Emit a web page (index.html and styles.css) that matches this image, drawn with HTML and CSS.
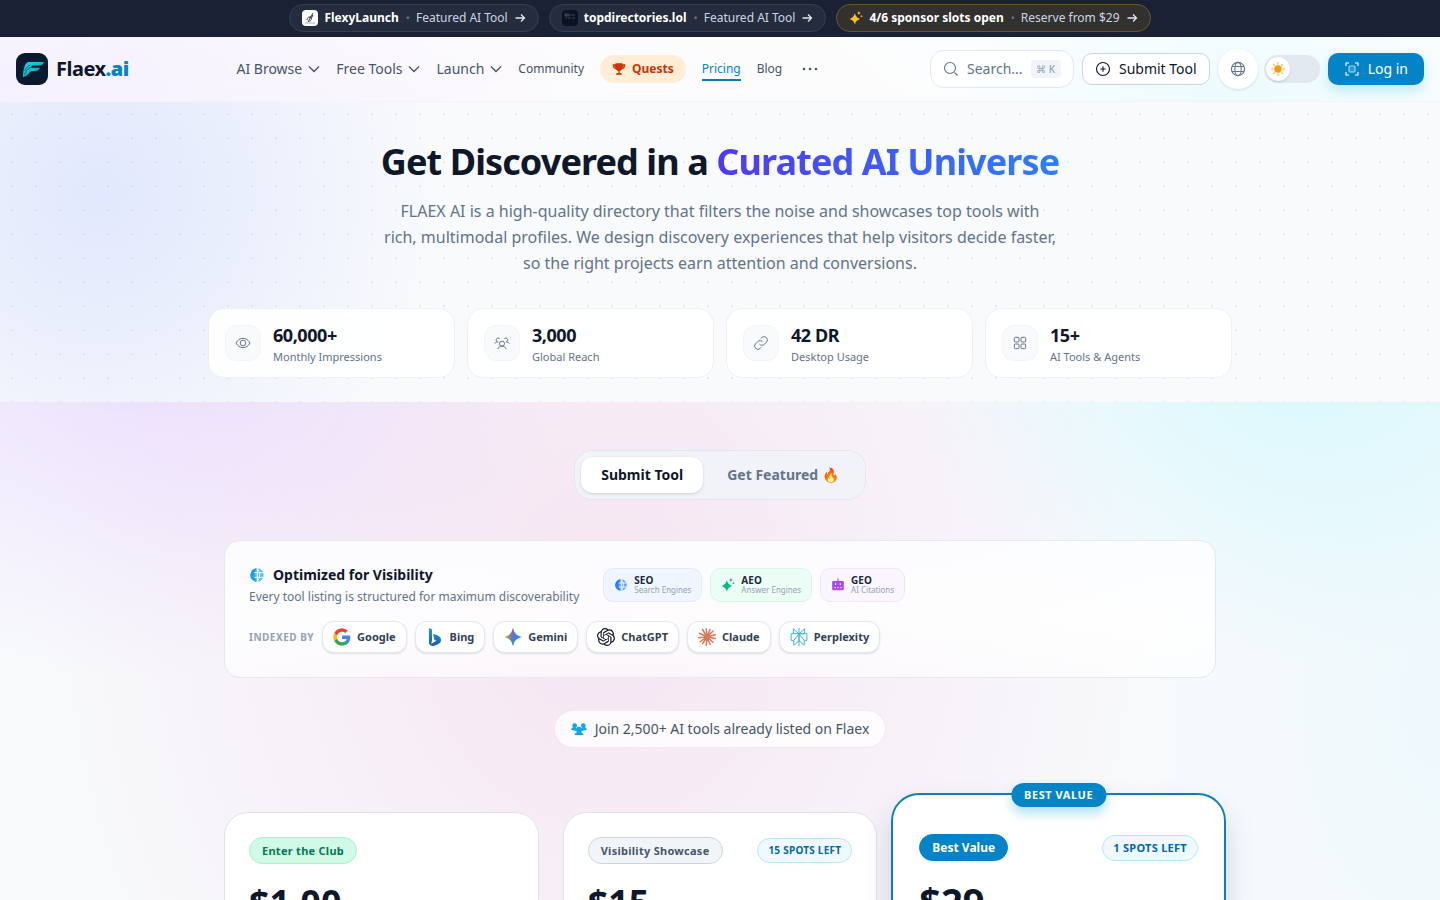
FILE: index.html
```html
<!DOCTYPE html>
<html lang="en">
<head>
<meta charset="utf-8">
<meta name="viewport" content="width=device-width, initial-scale=1">
<title>Flaex.ai – Pricing</title>
<link rel="stylesheet" href="styles.css">
</head>
<body>
<svg class="defs" aria-hidden="true">
  <defs>
    <linearGradient id="wing" x1="0" y1="0" x2="1" y2="1"><stop offset="0" stop-color="#0fe3e6"/><stop offset="1" stop-color="#138fb5"/></linearGradient>
    <linearGradient id="bing" x1="0" y1="0" x2="0" y2="1"><stop offset="0" stop-color="#1ba6c4"/><stop offset="1" stop-color="#1758b8"/></linearGradient>
    <linearGradient id="gem" x1="0" y1="0" x2="1" y2="0"><stop offset="0" stop-color="#f4b400"/><stop offset=".38" stop-color="#6a86a0"/><stop offset=".6" stop-color="#3b7cf5"/><stop offset="1" stop-color="#3b82f6"/></linearGradient>
    <linearGradient id="gemv" x1="0" y1="0" x2="0" y2="1"><stop offset="0" stop-color="#ea4335"/><stop offset=".38" stop-color="#ea4335" stop-opacity="0"/><stop offset=".65" stop-color="#2a9d5c" stop-opacity="0"/><stop offset="1" stop-color="#22a052"/></linearGradient>
    <symbol id="arrow" viewBox="0 0 12 12"><path d="M1.500 6h9M7 2.500L10.500 6 7 9.500"/></symbol>
    <symbol id="chev" viewBox="0 0 12 12"><path d="M1 3.500l5 5 5-5"/></symbol>
    <symbol id="spark" viewBox="0 0 24 24"><path d="M10 4c1.500 5.500 3.500 7.500 9 9.500-5.500 2-7.500 4-9 9.500-1.500-5.500-3.500-7.500-9-9.500 5.500-2 7.500-4 9-9.500zM17 0c.6 2.200 1.200 2.900 3.400 3.500-2.200.6-2.800 1.300-3.400 3.500-.6-2.200-1.200-2.900-3.400-3.500C15.800 2.900 16.400 2.200 17 0zM21.500 6.500c.4 1.400.9 1.900 2.300 2.300-1.400.4-1.900.9-2.300 2.300-.4-1.400-.9-1.900-2.300-2.300 1.400-.4 1.900-.9 2.300-2.300z"/></symbol>
    <symbol id="halfglobe" viewBox="0 0 24 24"><circle cx="12" cy="12" r="10" fill="currentColor" opacity=".7"/><path fill="currentColor" d="M12 2a10 10 0 0 0 0 20c-5-5.500-5-14.500 0-20z"/><path d="M12.500 2.500v19M8 8.500h13.500M8 15.500h13.500M12 2c5.500 6 5.500 14 0 20" fill="none" stroke="#fff" stroke-width="1.500"/></symbol>
    <symbol id="people" viewBox="0 0 24 24"><circle cx="12" cy="13" r="3.800"/><path d="M5.500 21c1-2.500 3.500-4.200 6.500-4.200s5.500 1.700 6.500 4.200M6.500 10.500a3 3 0 1 1 2-5M17.500 10.500a3 3 0 1 0-2-5M1 13c.7-1.600 2.200-2.600 4.500-2.600M23 13c-.7-1.600-2.200-2.600-4.500-2.600"/></symbol>
    <symbol id="crowd" viewBox="0 0 24 24"><circle cx="5.500" cy="7" r="3.500"/><circle cx="18.500" cy="7" r="3.500"/><circle cx="12" cy="13" r="4.500"/><path d="M0 13c1-3 3-4 6-4l3 3-2 3zM24 13c-1-3-3-4-6-4l-3 3 2 3zM5 21c1-3 3-5 7-5s6 2 7 5z"/></symbol>
  </defs>
</svg>

<div class="promo">
  <a class="promo-pill" href="#"><svg class="app-ico" viewBox="0 0 16 16"><rect width="16" height="16" rx="4" fill="#fff"/><path d="M6 12l5-9M5 10c0-3 3-4 4-2s-1 4-3 3M9 9l2-4-4 3" fill="none" stroke="#34504f" stroke-width="1"/><path d="M3 13h10" stroke="#aab7b5"/></svg><strong>FlexyLaunch</strong><i>•</i><span>Featured AI Tool</span><svg class="arrow"><use href="#arrow"/></svg></a>
  <a class="promo-pill" href="#"><svg class="app-ico" viewBox="0 0 16 16"><rect width="16" height="16" rx="4" fill="#0b1224"/><path d="M3 4h4v2H3zM8 5h5M3 8h2M6 8h3M10 8h3" stroke="#39445d" fill="#28334c"/></svg><strong>topdirectories.lol</strong><i>•</i><span>Featured AI Tool</span><svg class="arrow"><use href="#arrow"/></svg></a>
  <a class="promo-pill gold" href="#"><svg class="spark"><use href="#spark"/></svg><strong>4/6 sponsor slots open</strong><i>•</i><span>Reserve from $29</span><svg class="arrow"><use href="#arrow"/></svg></a>
</div>

<header class="header">
  <a class="brand" href="#"><svg viewBox="0 0 32 32"><rect width="32" height="32" rx="9" fill="#0a1a2f"/><path d="M12 9h16c-1 2.500-2.500 3.500-5 3.500h-7l-1 2.300h9c-1 2.300-2.500 3.200-5 3.200h-3c-3 .3-4 5.500-9 6C7 19 8 11 12 9z" fill="url(#wing)"/><path d="M8.500 22c2-5 4-7.500 8.500-8M8.500 18c1.500-3 3-5 6-6" fill="none" stroke="#0a1a2f" stroke-width=".6"/></svg><span>Flaex<b>.ai</b></span></a>
  <nav class="nav">
    <button class="drop">AI Browse<svg><use href="#chev"/></svg></button>
    <button class="drop">Free Tools<svg><use href="#chev"/></svg></button>
    <button class="drop">Launch<svg><use href="#chev"/></svg></button>
    <a href="#">Community</a>
    <a class="quests" href="#"><svg viewBox="0 0 24 24"><path d="M6 2h12v2h5c0 5-2 8-6 9-1 1.500-2.500 2.300-4 2.700V19h3l1 3H7l1-3h3v-3.300c-1.500-.4-3-1.200-4-2.700-4-1-6-4-6-9h5z" fill="currentColor"/><path d="M3 5.500l3 5M21 5.500l-3 5" stroke="#e98b56"/></svg>Quests</a>
    <a class="current" href="#">Pricing</a>
    <a href="#">Blog</a>
    <button class="more" aria-label="More"><svg viewBox="0 0 16 16"><circle cx="2" cy="8" r="1.300"/><circle cx="8" cy="8" r="1.300"/><circle cx="14" cy="8" r="1.300"/></svg></button>
  </nav>
  <div class="actions">
    <button class="search"><svg viewBox="0 0 16 16"><circle cx="7" cy="7" r="5.500"/><path d="M11.500 11.500l3 3"/></svg><span>Search...</span><kbd>⌘ K</kbd></button>
    <button class="submit"><svg viewBox="0 0 16 16"><circle cx="8" cy="8" r="6.500"/><path d="M8 5.300v5.400M5.300 8h5.400"/></svg>Submit Tool</button>
    <button class="lang" aria-label="Language"><svg viewBox="0 0 16 16"><circle cx="8" cy="8" r="6.600"/><ellipse cx="8" cy="8" rx="3.200" ry="6.600"/><path d="M2 5.500h12M2 10.500h12"/></svg></button>
    <button class="theme" role="switch" aria-checked="false" aria-label="Dark mode"><span><svg viewBox="0 0 16 16"><circle cx="8" cy="8" r="3.700" fill="#ff9800"/><path d="M8 1.500v1.500M8 13v1.500M1.500 8H3M13 8h1.500M3.400 3.400l1 1M11.600 11.600l1 1M3.400 12.600l1-1M11.600 4.400l1-1" stroke="#ffb547" stroke-width="1.200" stroke-linecap="round"/></svg></span></button>
    <button class="login"><svg viewBox="0 0 16 16"><path d="M2 5V2h3M11 2h3v3M14 11v3h-3M5 14H2v-3"/><rect x="5" y="5" width="6" height="6" rx="1" fill="#2a98d2" stroke="#a8d6ee"/></svg>Log in</button>
  </div>
</header>

<section class="hero">
  <h1>Get Discovered in a <span>Curated AI Universe</span></h1>
  <p>FLAEX AI is a high-quality directory that filters the noise and showcases top tools with rich, multimodal profiles. We design discovery experiences that help visitors decide faster, so the right projects earn attention and conversions.</p>
  <div class="stats">
    <div class="stat"><div class="stat-ico"><svg viewBox="0 0 24 24"><path d="M1.500 12C4 7.500 7.500 5 12 5s8 2.500 10.500 7c-2.500 4.500-6 7-10.500 7S4 16.500 1.500 12z"/><circle cx="12" cy="12" r="4.200"/></svg></div><div><strong>60,000+</strong><span>Monthly Impressions</span></div></div>
    <div class="stat"><div class="stat-ico"><svg><use href="#people"/></svg></div><div><strong>3,000</strong><span>Global Reach</span></div></div>
    <div class="stat"><div class="stat-ico"><svg viewBox="0 0 24 24"><path d="M9.500 13.500a5 5 0 0 0 7.500.5l3.500-3.500a5 5 0 0 0-7-7L11.500 5.500M14.500 10.500a5 5 0 0 0-7.500-.5l-3.500 3.500a5 5 0 0 0 7 7l2-2"/></svg></div><div><strong>42 DR</strong><span>Desktop Usage</span></div></div>
    <div class="stat"><div class="stat-ico"><svg viewBox="0 0 24 24"><rect x="3.500" y="3.500" width="7" height="7" rx="1.500"/><rect x="13.500" y="3.500" width="7" height="7" rx="1.500"/><rect x="3.500" y="13.500" width="7" height="7" rx="1.500"/><rect x="13.500" y="13.500" width="7" height="7" rx="1.500"/></svg></div><div><strong>15+</strong><span>AI Tools &amp; Agents</span></div></div>
  </div>
</section>

<main class="main">
  <div class="tabs" role="tablist">
    <button class="active" role="tab" aria-selected="true">Submit Tool</button>
    <button role="tab" aria-selected="false">Get Featured 🔥</button>
  </div>

  <section class="panel">
    <div class="panel-top">
      <div>
        <h2><svg><use href="#halfglobe"/></svg>Optimized for Visibility</h2>
        <p>Every tool listing is structured for maximum discoverability</p>
      </div>
      <div class="kinds">
        <div class="kind seo"><svg><use href="#halfglobe"/></svg><div><b>SEO</b><span>Search Engines</span></div></div>
        <div class="kind aeo"><svg><use href="#spark"/></svg><div><b>AEO</b><span>Answer Engines</span></div></div>
        <div class="kind geo"><svg viewBox="0 0 24 24"><path fill="currentColor" d="M11 1h2v4h7a2 2 0 0 1 2 2v12a2 2 0 0 1-2 2H4a2 2 0 0 1-2-2V7a2 2 0 0 1 2-2h7z"/><path d="M8 9v3M16 9v3M6 16.500h2M11 16.500h2M16 16.500h2" stroke="#fff" stroke-width="2"/></svg><div><b>GEO</b><span>AI Citations</span></div></div>
      </div>
    </div>
    <div class="indexed">
      <span class="label">INDEXED BY</span>
      <span class="chip"><svg viewBox="0 0 24 24"><path fill="#4285f4" d="M23 12.300c0-.8-.1-1.500-.2-2.300H12v4.500h6.200a5.300 5.300 0 0 1-2.300 3.500v3h3.700c2.200-2 3.400-5 3.400-8.700z"/><path fill="#34a853" d="M12 23.500c3.100 0 5.700-1 7.600-2.800L15.900 18c-1 .7-2.400 1.100-3.900 1.100-3 0-5.500-2-6.400-4.800H1.800v3A11.500 11.500 0 0 0 12 23.500z"/><path fill="#fbbc05" d="M5.600 14.300a7 7 0 0 1 0-4.500v-3H1.800a11.500 11.500 0 0 0 0 10.500z"/><path fill="#ea4335" d="M12 5c1.700 0 3.200.6 4.400 1.700l3.300-3.300A11.500 11.500 0 0 0 1.800 6.800l3.800 3C6.500 7 9 5 12 5z"/></svg>Google</span>
      <span class="chip"><svg viewBox="0 0 24 24"><path fill="url(#bing)" d="M4 0l4 1.500v15l-1 4.500 7-4-3-1.500L9.500 8c5 1 10.500 3 10.500 8 0 3-2 4.500-4 5.500L10 24c-3 0-6-1.500-6-4z"/></svg>Bing</span>
      <span class="chip"><svg viewBox="0 0 24 24"><path fill="url(#gem)" d="M12 0c1.500 7 5 10.500 12 12-7 1.500-10.500 5-12 12C10.500 17 7 13.500 0 12 7 10.500 10.500 7 12 0z"/><path fill="url(#gemv)" d="M12 0c1.500 7 5 10.500 12 12-7 1.500-10.500 5-12 12C10.500 17 7 13.500 0 12 7 10.500 10.500 7 12 0z"/></svg>Gemini</span>
      <span class="chip"><svg viewBox="0 0 24 24"><path fill="#111827" d="M22.280 9.820a5.980 5.980 0 0 0-.520-4.910 6.050 6.050 0 0 0-6.510-2.900A6.070 6.070 0 0 0 4.980 4.180a5.980 5.980 0 0 0-4 2.900 6.050 6.050 0 0 0 .740 7.100 5.980 5.980 0 0 0 .510 4.910 6.050 6.050 0 0 0 6.520 2.900A5.980 5.980 0 0 0 13.260 24a6.060 6.060 0 0 0 5.770-4.210 5.990 5.990 0 0 0 4-2.900 6.060 6.060 0 0 0-.750-7.070zm-9.020 12.610a4.480 4.480 0 0 1-2.880-1.040l.140-.080 4.780-2.760a.8.8 0 0 0 .390-.680v-6.740l2.020 1.170a.07.07 0 0 1 .040.050v5.580a4.500 4.500 0 0 1-4.490 4.500zM3.600 18.300a4.470 4.470 0 0 1-.540-3.010l.140.080 4.790 2.760a.77.77 0 0 0 .780 0l5.840-3.370v2.330a.08.08 0 0 1-.030.060L9.740 19.950a4.500 4.500 0 0 1-6.140-1.650zM2.340 7.900a4.490 4.490 0 0 1 2.370-1.980v5.680a.77.77 0 0 0 .390.680l5.810 3.350-2.020 1.170a.08.08 0 0 1-.070 0l-4.830-2.790A4.500 4.500 0 0 1 2.340 7.870zm16.600 3.850l-5.840-3.390L15.120 7.200a.08.08 0 0 1 .070 0l4.830 2.790a4.490 4.490 0 0 1-.680 8.100v-5.680a.79.79 0 0 0-.400-.660zm2.010-3.020l-.140-.090-4.770-2.780a.78.78 0 0 0-.790 0L9.410 9.230V6.900a.07.07 0 0 1 .030-.060l4.830-2.790a4.500 4.500 0 0 1 6.680 4.660zM8.310 12.860l-2.020-1.160a.08.08 0 0 1-.040-.060V6.070a4.500 4.500 0 0 1 7.380-3.450l-.140.080L8.700 5.460a.8.8 0 0 0-.390.680zm1.100-2.370L12 9l2.610 1.500v3L12 15l-2.600-1.500z"/></svg>ChatGPT</span>
      <span class="chip"><svg viewBox="0 0 24 24" stroke="#d97757" stroke-width="2" stroke-linecap="round"><path d="M12 12L11 1M12 12l4-10M12 12l8-8M12 12l11-3M12 12l11 2M12 12l8 7M12 12l4 10M12 12l-1 11M12 12L6 21M12 12l-9 6M12 12L1 13M12 12L2 7M12 12L6 2"/></svg>Claude</span>
      <span class="chip"><svg viewBox="0 0 24 24" stroke="#35b8c5" stroke-width="1.300"><path d="M12 0v24M4.500 1L12 8v9l-7 6v-6.500L12 8l7.500-7v6.500M4.500 1v6.500M19.500 7.500L12 8l7 8.500V23l-7-6M1.500 7.500h21v9H19M1.500 7.500v9H5"/></svg>Perplexity</span>
    </div>
  </section>

  <div class="join"><svg><use href="#crowd"/></svg>Join 2,500+ AI tools already listed on Flaex</div>

  <section class="plans">
    <article class="plan">
      <div class="plan-head"><span class="tag green">Enter the Club</span></div>
      <div class="price">$1.00</div>
    </article>
    <article class="plan">
      <div class="plan-head"><span class="tag">Visibility Showcase</span><span class="spots">15 SPOTS LEFT</span></div>
      <div class="price">$15</div>
    </article>
    <article class="plan best">
      <div class="ribbon">BEST VALUE</div>
      <div class="plan-head"><span class="tag blue">Best Value</span><span class="spots">1 SPOTS LEFT</span></div>
      <div class="price">$29</div>
    </article>
  </section>
</main>
</body>
</html>
```
FILE: styles.css
```css
*, *::before, *::after { box-sizing: border-box; }
body {
  margin: 0;
  min-height: 100vh;
  font-family: "Noto Sans", "Liberation Sans", sans-serif;
  font-size: 14px;
  line-height: 20px;
  color: #0f172a;
  overflow-x: hidden;
  background:
    radial-gradient(ellipse 440px 340px at 140px 340px, rgba(228, 206, 255, .62), rgba(233, 213, 255, 0)),
    radial-gradient(ellipse 400px 320px at 1300px 340px, rgba(207, 248, 254, .8), rgba(207, 250, 254, 0)),
    radial-gradient(ellipse 560px 680px at 600px 600px, rgba(243, 200, 228, .42), rgba(243, 200, 228, 0)),
    radial-gradient(ellipse 300px 500px at 1440px 700px, rgba(224, 247, 253, .4), rgba(224, 247, 253, 0)),
    #f8fafc;
}
button { font: inherit; color: inherit; background: none; border: 0; padding: 0; cursor: pointer; }
a { color: inherit; text-decoration: none; }
h1, h2, p { margin: 0; }
svg { display: block; flex: none; width: 16px; height: 16px; fill: none; }
.defs { position: absolute; width: 0; height: 0; }

.promo {
  display: flex; justify-content: center; gap: 10px;
  height: 37px; padding-top: 4px;
  background: #1a2134;
}
.promo-pill {
  display: flex; align-items: center;
  height: 28px; padding: 0 12px;
  border: 1px solid #373e50; border-radius: 14px;
  background: #252c3e; color: #cbd5e1; font-size: 12px; line-height: 16px;
}
.promo-pill strong { margin-left: 6px; color: #fff; }
.promo-pill i { margin: 0 6px 0 7px; font-style: normal; color: #64748b; font-size: 11px; }
.promo-pill.gold { background: #33312f; border-color: #6b5620; }
.promo-pill .spark { width: 14px; height: 14px; fill: #fbbf24; }
.promo-pill .arrow { width: 12px; height: 12px; margin-left: 6px; stroke: #e2e8f0; stroke-width: 1.300; }

.header {
  display: flex; align-items: center; justify-content: space-between;
  height: 65px; padding: 0 16px;
  background: rgba(255, 255, 255, .6);
  background-image:
    radial-gradient(ellipse 600px 200px at 0 40px, rgba(243, 234, 255, .6), rgba(243, 234, 255, 0)),
    radial-gradient(ellipse 300px 110px at 1230px 50px, rgba(224, 250, 254, .5), rgba(224, 250, 254, 0));
  border-bottom: 1px solid #f3f4fb;
}
.brand { display: flex; align-items: center; gap: 8px; font-size: 20px; font-weight: 700; letter-spacing: -.025em; }
.brand svg { width: 32px; height: 32px; }
.brand b { color: #0284c7; }
.nav { display: flex; align-items: center; gap: 16px; color: #475569; font-size: 12px; }
.drop { display: flex; align-items: center; gap: 6px; font-size: 14px; }
.drop svg { width: 12px; height: 12px; stroke: #475569; stroke-width: 1.300; }
.quests {
  display: flex; align-items: center; gap: 6px;
  height: 28px; padding: 0 12px; border-radius: 14px;
  background: #ffedd5; color: #ca3500; font-weight: 700;
}
.quests svg { width: 14px; height: 14px; }
.current { color: #0284c7; box-shadow: 0 2px #0d7ab8; }
.more { padding: 8px 4px; }
.more svg { fill: currentColor; }
.actions { display: flex; align-items: center; gap: 8px; }
.actions svg { stroke: currentColor; stroke-width: 1.100; }
.search {
  display: flex; align-items: center;
  width: 144px; height: 38px; padding: 0 12px;
  border: 1px solid #e2e8f0; border-radius: 14px;
  background: rgba(255, 255, 255, .8); color: #64748b;
}
.search span { margin: 0 8px; }
.search kbd {
  width: 30px; border-radius: 4px; text-align: center;
  background: #f1f5f9; color: #94a3b8; font: 500 10px/18px "Noto Sans", "DejaVu Sans", sans-serif;
}
.submit {
  display: flex; align-items: center; gap: 8px;
  height: 32px; padding: 0 12px;
  border: 1px solid #cbd5e1; border-radius: 10px; background: #fff;
}
.lang {
  display: grid; place-items: center; width: 40px; height: 40px;
  border-radius: 50%; background: #fff; color: #64748b; box-shadow: 0 1px 3px rgba(15, 23, 42, .12);
}
.theme { width: 56px; height: 28px; margin-left: -2px; border-radius: 14px; background: #e2e8f0; padding: 2px; }
.theme span { display: grid; place-items: center; width: 24px; height: 24px; border-radius: 50%; background: #fff; box-shadow: 0 1px 2px rgba(15, 23, 42, .15); }
.theme svg { stroke: none; }
.login {
  display: flex; align-items: center; gap: 8px;
  height: 32px; padding: 0 16px; border-radius: 10px;
  background: #0284c7; color: #fff; box-shadow: 0 6px 12px rgba(34, 190, 240, .25);
}

.hero {
  padding: 36px 24px 24px; text-align: center;
  background:
    radial-gradient(circle at 12px 12px, rgba(148, 163, 184, .17) 1px, transparent 1px) 0 0 / 24px 24px,
    radial-gradient(circle 340px at 100px 90px, rgba(199, 210, 254, .46), rgba(199, 210, 254, 0)),
    #f8fafc;
}
.hero h1 { font-size: 36px; line-height: 48px; letter-spacing: -.025em; }
.hero h1 span { background: linear-gradient(90deg, #4f39f6, #2b7fff); background-clip: text; -webkit-background-clip: text; color: transparent; }
.hero p { max-width: 674px; margin: 12px auto 0; font-size: 16px; line-height: 26px; color: #64748b; }
.stats { display: grid; grid-template-columns: repeat(4, 1fr); gap: 12px; max-width: 1024px; margin: 32px auto 0; text-align: left; }
.stat {
  display: flex; align-items: center; gap: 12px; height: 70px; padding: 0 16px;
  border: 1px solid #edf1f6; border-radius: 16px; background: rgba(255, 255, 255, .9);
}
.stat-ico { display: grid; place-items: center; width: 36px; height: 36px; border: 1px solid #f1f4f8; border-radius: 12px; background: #f8fafc; }
.stat-ico svg { stroke: #64748b; stroke-width: 1.500; }
.stat strong { display: block; font-size: 18px; line-height: 28px; letter-spacing: -.025em; }
.stat span { display: block; font-size: 11px; line-height: 16px; color: #64748b; }

.main { display: flex; flex-direction: column; align-items: center; padding: 48px 24px; }
.tabs { display: flex; padding: 6px; border: 1px solid #e5e7ef; border-radius: 18px; background: #f1f3f8; color: #64748b; }
.tabs button { height: 36px; padding: 0 20px; border-radius: 12px; font-weight: 700; }
.tabs button + button { padding: 0 20px 0 24px; }
.tabs .active { background: #fff; color: #0f172a; box-shadow: 0 1px 3px rgba(15, 23, 42, .15); }
.panel {
  width: 100%; max-width: 992px; margin-top: 40px; padding: 24px;
  border: 1px solid #e7e8f1; border-radius: 16px;
  background: linear-gradient(180deg, rgba(252, 253, 255, .9), rgba(255, 255, 255, .85) 60%, rgba(255, 255, 255, .6));
}
.panel-top { display: flex; align-items: flex-start; gap: 24px; }
.panel h2 { display: flex; align-items: center; gap: 8px; font-size: 14px; line-height: 20px; }
.panel h2 svg { color: #0ea5e9; }
.panel p { margin-top: 2px; font-size: 12px; line-height: 20px; color: #64748b; }
.kinds { display: flex; gap: 8px; padding-top: 3px; }
.kind { display: flex; align-items: center; gap: 6px; height: 34px; padding: 0 10px; border: 1px solid; border-radius: 10px; }
.kind svg { width: 14px; height: 14px; }
.kind b { display: block; font-size: 10px; line-height: 10px; color: #1e293b; }
.kind span { display: block; font-size: 8px; line-height: 10px; color: #94a3b8; }
.seo { background: #eff6ff; border-color: #e3ebfb; color: #2b7fff; }
.aeo { background: #ecfdf5; border-color: #d9f5e8; color: #00bc7d; }
.aeo svg { fill: #00bc7d; }
.geo { background: #faf5ff; border-color: #f1e6fc; color: #ad46ff; }
.indexed { display: flex; align-items: center; gap: 8px; margin-top: 14px; }
.label { font-size: 10px; font-weight: 700; letter-spacing: .05em; color: #94a3b8; }
.chip {
  display: flex; align-items: center; gap: 6px; height: 32px; padding: 0 10px;
  border: 1px solid #e2e8f0; border-radius: 12px; background: #fff;
  color: #334155; font-size: 11px; font-weight: 700; box-shadow: 0 1px 2px rgba(15, 23, 42, .12);
}
.chip svg { width: 18px; height: 18px; }
.join {
  display: flex; align-items: center; gap: 8px; height: 38px; margin-top: 32px; padding: 0 16px;
  border: 1px solid #efeaf3; border-radius: 19px; background: rgba(255, 255, 255, .8); color: #475569;
}
.join svg { fill: #0ea5e9; }

.plans { display: grid; grid-template-columns: repeat(3, 1fr); gap: 24px; width: 100%; max-width: 992px; margin-top: 64px; }
.plan { padding: 24px; border: 1px solid #e2e2ee; border-radius: 24px; background: #fff; }
.plan-head { display: flex; align-items: center; justify-content: space-between; }
.tag { padding: 0 12px; border: 1px solid #cbd5e1; border-radius: 14px; background: #f1f5f9; color: #475569; font-size: 11px; line-height: 25px; font-weight: 700; letter-spacing: .025em; }
.tag.green { background: #d0fae5; border-color: #a4f4cf; color: #007a55; }
.tag.blue { background: #0284c7; border-color: #0284c7; color: #fff; }
.spots { padding: 0 10px; border: 1px solid #b8e6fe; border-radius: 13px; background: #f0f9ff; color: #0069a8; font-size: 10px; line-height: 23px; font-weight: 700; letter-spacing: .025em; }
.price { margin-top: 15px; font-size: 36px; line-height: 48px; font-weight: 700; }
.plan.best {
  position: relative; margin: -19px -10px 0; padding: 39px 26px 24px;
  border: 2px solid #0d7fc0; border-radius: 28px;
  box-shadow: 0 16px 30px rgba(15, 60, 100, .18);
}
.best .tag { font-size: 12px; letter-spacing: 0; }
.best .spots { font-size: 11px; line-height: 24px; }
.best .price { margin-top: 16px; font-size: 38px; }
.ribbon {
  position: absolute; top: -12px; left: 50%; transform: translateX(-50%);
  padding: 0 13px; border-radius: 12px; background: #0284c7; color: #fff;
  font-size: 11px; line-height: 24px; font-weight: 700; letter-spacing: .05em; white-space: nowrap;
  box-shadow: 0 6px 12px rgba(14, 165, 233, .35);
}
```
